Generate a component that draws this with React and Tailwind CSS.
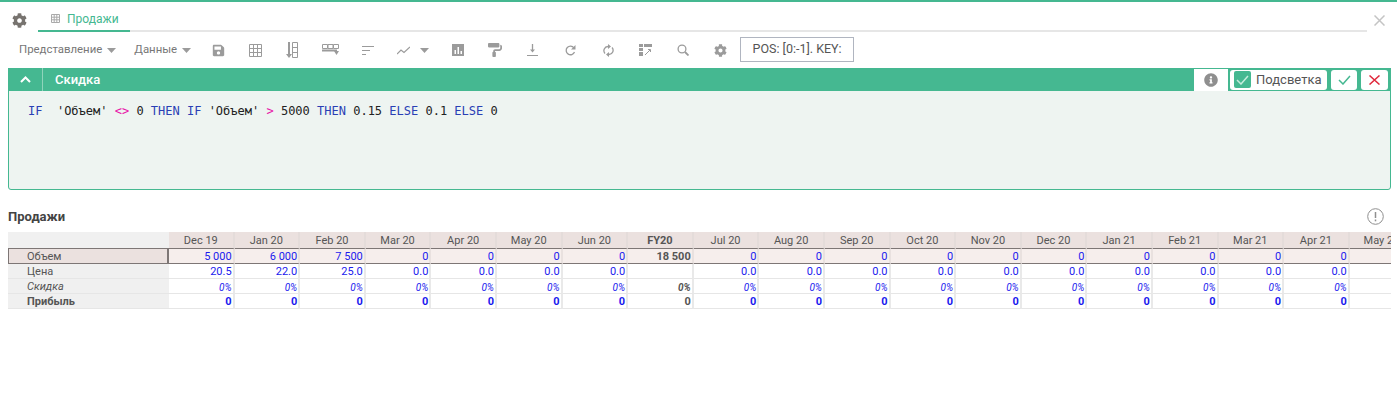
import React from "react";
import { FaCog, FaSave, FaPaintRoller, FaInfoCircle } from "react-icons/fa";

const G = "#9b9b9b";
const months = ["Dec 19","Jan 20","Feb 20","Mar 20","Apr 20","May 20","Jun 20","FY20","Jul 20","Aug 20","Sep 20","Oct 20","Nov 20","Dec 20","Jan 21","Feb 21","Mar 21","Apr 21","May 21"];
const vol = ["5 000","6 000","7 500"];
const price = ["20.5","22.0","25.0"];

const Caret = ({ className = "" }) => (
  <svg width="9" height="5" viewBox="0 0 9 5" className={className}><path d="M0 0h9L4.5 5z" fill={G} /></svg>
);

const Btn = ({ children, w = "w-[37px]" }) => (
  <div className={`${w} h-6 flex items-center justify-center shrink-0`}>{children}</div>
);

const GridIcon = () => (
  <svg width="13" height="13" viewBox="0 0 13 13" fill="none" stroke={G}><path d="M.5.5h12v12H.5zM4.5.5v12M8.5.5v12M.5 4.5h12M.5 8.5h12" /></svg>
);
const ColsIcon = () => (
  <svg width="12" height="17" viewBox="0 0 12 17" fill="none"><path d="M3 0v14" stroke={G} strokeWidth="2"/><path d="M0 12l3 4 3-4z" fill={G}/><path d="M6.500.5h5v15h-5zM6.500 5.500h5M6.500 10.500h5" stroke={G}/></svg>
);
const RowsIcon = () => (
  <svg width="17" height="12" viewBox="0 0 17 12" fill="none"><path d="M.5.5h5v4h-5zM6 .5h5v4H6zM11.500.5h5v4h-5z" stroke={G}/><path d="M0 6.500h15" stroke={G} strokeWidth="2"/><path d="M12 7h5l-2.500 4z" fill={G}/></svg>
);
const SortIcon = () => (
  <svg width="12" height="9" viewBox="0 0 12 9" fill="none" stroke={G}><path d="M0 .5h12M0 4.500h8M0 8.500h4" /></svg>
);
const LineIcon = () => (
  <svg width="13" height="9" viewBox="0 0 13 9" fill="none" stroke={G} strokeWidth="1.200"><path d="M0 8l4-4 3 2.500L13 1" /></svg>
);
const BarsIcon = () => (
  <svg width="12" height="12" viewBox="0 0 12 12"><path d="M0 0h12v12H0z" fill={G}/><path d="M2.500 6h1.500v4H2.500zM5.500 3h1.500v7H5.500zM8.500 7h1.500v3H8.500z" fill="#fff"/></svg>
);
const DownIcon = () => (
  <svg width="11" height="12" viewBox="0 0 11 12" fill="none"><path d="M5.500 0v7" stroke={G} strokeWidth="1.300"/><path d="M3 5.500h5L5.500 8.500z" fill={G}/><path d="M0 11.500h11" stroke={G}/></svg>
);
const RedoIcon = () => (
  <svg width="11" height="11" viewBox="0 0 11 11" fill="none"><path d="M9.500 7a4.300 4.300 0 1 1-.6-4.200" stroke={G} strokeWidth="1.300"/><path d="M10.500 0v4.500H6z" fill={G}/></svg>
);
const SyncIcon = () => (
  <svg width="11" height="13" viewBox="0 0 11 13" fill="none"><path d="M2 9.500a4.200 4.200 0 0 1 3-7M9 3.500a4.200 4.200 0 0 1-3 7" stroke={G} strokeWidth="1.300"/><path d="M5 0l3 2.500L5 5zM6 8l-3 2.500L6 13z" fill={G}/></svg>
);
const EditIcon = () => (
  <svg width="13" height="12" viewBox="0 0 13 12" fill="none"><path d="M0 0h4v3H0zM0 4h4v3H0zM0 8h4v4H0zM5 0h8v3H5z" fill={G}/><path d="M6 11l5-5M9 5.500l2.500 0 0 2.500" stroke={G}/></svg>
);
const SearchIcon = () => (
  <svg width="12" height="12" viewBox="0 0 12 12" fill="none" stroke={G} strokeWidth="1.300"><circle cx="5" cy="5" r="3.900"/><path d="M8 8l3.500 3.500" strokeWidth="1.800"/></svg>
);

const cell = "h-full flex items-center justify-end pr-[1px] pt-[2px] border-r-2 border-[#e9e9e9] min-w-0";

export default function App() {
  return (
    <div className="w-[1397px] h-[412px] bg-white overflow-hidden border-t-2 border-[#45b891] font-['Roboto',sans-serif] text-[11px] text-[#555]">
      <div className="h-[30px] flex items-end pl-[12px] pr-[12px]">
        <FaCog size={15} color="#77736f" className="mb-[4px] shrink-0" />
        <div className="flex-1 ml-[11px] h-[30px] border-b-2 border-[#e6e6e6] flex items-end w-0">
          <div className="w-[92px] h-[30px] -mb-[2px] border-b-2 border-[#45b891] flex items-center pl-[13px] gap-[7px] pt-[5px]">
            <svg width="9" height="9" viewBox="0 0 9 9" fill="none" stroke="#aaa"><path d="M.5.5h8v8h-8zM3.200.5v8M5.800.5v8M.5 3.200h8M.5 5.800h8"/></svg>
            <span className="text-[12px] text-[#45b891]">Продажи</span>
          </div>
        </div>
        <svg width="11" height="11" viewBox="0 0 11 11" stroke="#c4c4c4" strokeWidth="1.500" className="ml-[7px] mb-[6px] shrink-0"><path d="M.5.5l10 10M10.500.5l-10 10"/></svg>
      </div>

      <div className="h-[36px] flex items-center pl-[19px]">
        <span className="text-[11.400px] text-[#777]">Представление</span>
        <Caret className="ml-[5px]" />
        <span className="ml-[18px] text-[11.400px] text-[#777]">Данные</span>
        <Caret className="ml-[5px]" />
        <div className="ml-[9px] flex items-center">
          <Btn><FaSave size={13} color={G} /></Btn>
          <Btn w="w-[36px]"><GridIcon /></Btn>
          <Btn w="w-[38px]"><ColsIcon /></Btn>
          <Btn w="w-[39px]"><RowsIcon /></Btn>
          <Btn w="w-[35px]"><SortIcon /></Btn>
          <Btn w="w-[37px]"><LineIcon /></Btn>
          <Caret className="-ml-[2px] mr-[11px]" />
          <Btn w="w-[36px]"><BarsIcon /></Btn>
          <Btn w="w-[38px]"><FaPaintRoller size={14} color={G} /></Btn>
          <Btn w="w-[37px]"><DownIcon /></Btn>
          <Btn w="w-[38px]"><RedoIcon /></Btn>
          <Btn w="w-[38px]"><SyncIcon /></Btn>
          <Btn><EditIcon /></Btn>
          <Btn w="w-[38px]"><SearchIcon /></Btn>
          <Btn w="w-[36px]"><FaCog size={13} color={G} /></Btn>
          <div className="ml-[2px] -mt-px w-[114px] h-[25px] border border-[#b0b5c0] flex items-center justify-center text-[12.500px] text-[#555] whitespace-nowrap">POS: [0:-1]. KEY:</div>
        </div>
      </div>

      <div className="mx-[8px] w-[1383px] h-[122px] border border-[#45b891] rounded-b-[3px] rounded-t-[2px] bg-[#eef4f1]">
        <div className="h-[23px] -mx-px -mt-px bg-[#45b891] flex items-center text-white">
          <div className="w-[35px] h-full flex items-center justify-center border-r border-[#8fd4bb]">
            <svg width="11" height="7" viewBox="0 0 11 7" fill="none" stroke="#fff" strokeWidth="2"><path d="M1 6l4.500-4.500L10 6"/></svg>
          </div>
          <span className="ml-[12px] text-[13px] font-medium">Скидка</span>
          <div className="ml-auto h-full flex items-center pr-[3px]">
            <div className="w-[34px] h-[22px] mt-px bg-white flex items-center justify-center"><FaInfoCircle size={14} color="#8f8f8f" /></div>
            <div className="ml-[2px] w-[97px] h-[20px] bg-white rounded-[3px] flex items-center pl-[4px] text-[13px] text-[#555]">
              <div className="w-[17px] h-[17px] bg-[#45b891] rounded-[2px] flex items-center justify-center">
                <svg width="13" height="10" viewBox="0 0 13 10" fill="none" stroke="#c6ecdc" strokeWidth="1.500"><path d="M1 5l4 4 7-8"/></svg>
              </div>
              <span className="ml-[5px]">Подсветка</span>
            </div>
            <div className="ml-[4px] w-[26px] h-[20px] bg-white rounded-[3px] flex items-center justify-center">
              <svg width="13" height="10" viewBox="0 0 13 10" fill="none" stroke="#45b891" strokeWidth="1.500"><path d="M1 5l4 4 7-8"/></svg>
            </div>
            <div className="ml-[4px] w-[27px] h-[20px] bg-white rounded-[3px] flex items-center justify-center">
              <svg width="11" height="10" viewBox="0 0 11 10" fill="none" stroke="#e0283c" strokeWidth="1.500"><path d="M.5.5l10 9M10.500.5l-10 9"/></svg>
            </div>
          </div>
        </div>
        <div className="pt-[13px] pl-[19px] font-['DejaVu_Sans_Mono',monospace] text-[12px] leading-[15px] whitespace-pre text-[#222]">
          <span className="text-[#2a3fb5]">IF</span>{"  'Объем' "}<span className="text-[#e815a8]">{"<>"}</span>{" 0 "}<span className="text-[#2a3fb5]">THEN IF</span>{" 'Объем' "}<span className="text-[#e815a8]">{">"}</span>{" 5000 "}<span className="text-[#2a3fb5]">THEN</span>{" 0.15 "}<span className="text-[#2a3fb5]">ELSE</span>{" 0.1 "}<span className="text-[#2a3fb5]">ELSE</span>{" 0"}
        </div>
      </div>

      <div className="mx-[8px] mt-[15px] h-[27px] flex items-start justify-between pr-[5px]">
        <span className="text-[13px] font-bold text-[#444] leading-[24px]">Продажи</span>
        <svg width="17" height="17" viewBox="0 0 17 17" fill="none" className="mt-[3px]"><circle cx="8.500" cy="8.500" r="7.800" stroke="#8f8f8f"/><path d="M8.500 4v6" stroke="#8f8f8f" strokeWidth="1.500"/><path d="M8.500 11.500v1.800" stroke="#8f8f8f" strokeWidth="1.500"/></svg>
      </div>

      <div className="mx-[8px] w-[1383px] overflow-hidden">
        <div className="grid grid-cols-[161px_repeat(19,65.6px)] grid-rows-[16px_16px_15px_15px_15px] w-max items-stretch">
          <div className="bg-[#f0f0f0]" />
          {months.map((m) => (
            <div key={m} className={`bg-[#ebe1df] border-r-2 border-[#e4dcda] flex items-center justify-center pt-[2px] text-[#555] ${m === "FY20" ? "font-bold" : ""}`}>{m}</div>
          ))}

          <div className="bg-[#ebe1df] border-y border-x border-[#7d7675] flex items-center pl-[18px] pt-[2px] border-r-2">Объем</div>
          {months.map((m, i) => (
            <div key={m} className={`bg-[#f6eeec] border-y border-[#7d7675] flex items-center justify-end pr-[1px] pt-[2px] border-r-2 border-r-[#e9e1df] ${m === "FY20" ? "font-bold text-[#555]" : "text-[#1a1aee]"}`}>
              {i === 18 ? "" : m === "FY20" ? "18 500" : i < 3 ? vol[i] : "0"}
            </div>
          ))}

          <div className="bg-[#f0f0f0] border-b border-[#e6e6e6] flex items-center pl-[19px] pt-[2px]">Цена</div>
          {months.map((m, i) => (
            <div key={m} className={`${cell} border-b border-b-[#e6e6e6] text-[#1a1aee]`}>
              {i === 18 || m === "FY20" ? "" : i < 3 ? price[i] : "0.0"}
            </div>
          ))}

          <div className="bg-[#f0f0f0] border-b border-[#e6e6e6] flex items-center pl-[19px] pt-[2px] italic">Скидка</div>
          {months.map((m, i) => (
            <div key={m} className={`${cell} border-b border-b-[#e6e6e6] italic text-[10px] ${m === "FY20" ? "font-bold text-[#555]" : "text-[#1a1aee]"}`}>
              {i === 18 ? "" : "0%"}
            </div>
          ))}

          <div className="bg-[#f0f0f0] border-b border-[#e6e6e6] flex items-center pl-[19px] pt-[2px] font-bold">Прибыль</div>
          {months.map((m, i) => (
            <div key={m} className={`${cell} border-b border-b-[#e6e6e6] font-bold ${m === "FY20" ? "text-[#555]" : "text-[#1a1aee]"}`}>
              {i === 18 ? "" : "0"}
            </div>
          ))}
        </div>
      </div>
    </div>
  );
}
